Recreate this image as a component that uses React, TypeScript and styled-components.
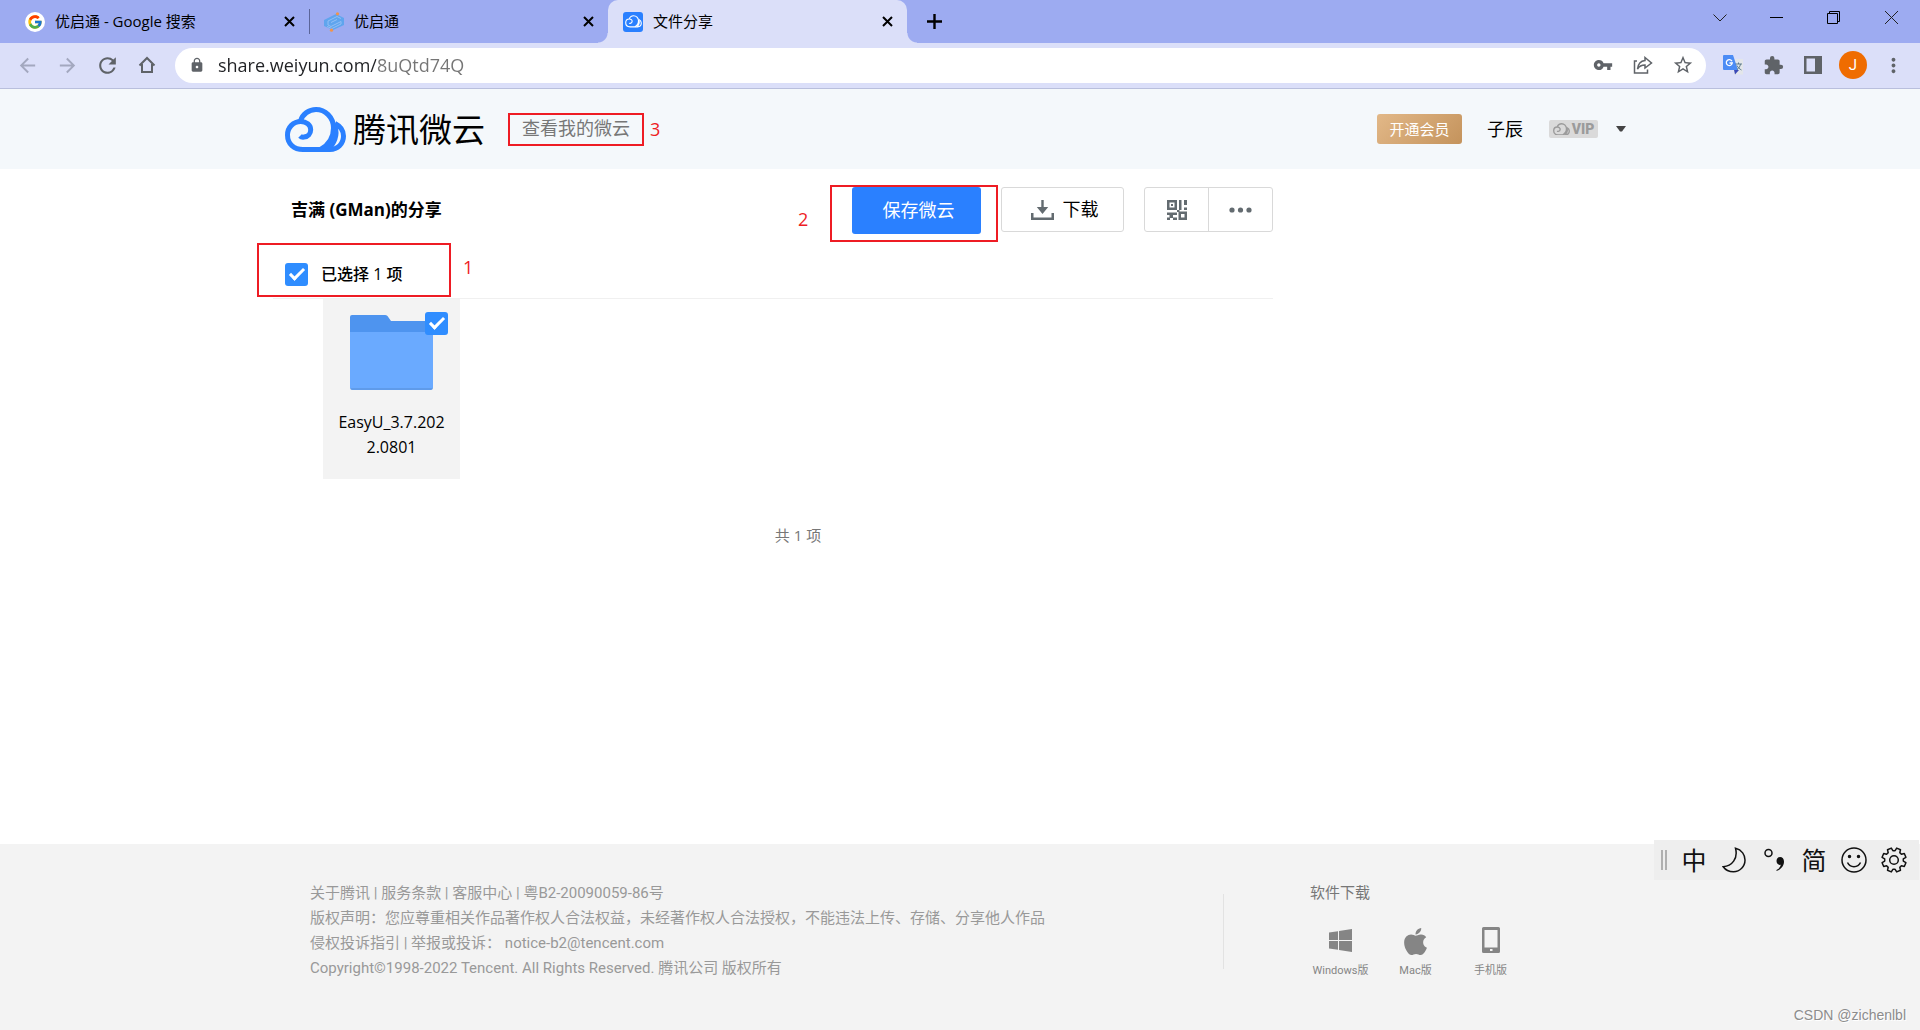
import React from "react";
import styled, { createGlobalStyle, css } from "styled-components";
import { FcGoogle } from "react-icons/fc";
import { FaApple } from "react-icons/fa";
import {
  MdArrowBack,
  MdArrowForward,
  MdRefresh,
  MdLock,
  MdVpnKey,
  MdStarBorder,
  MdExtension,
  MdMoreVert,
} from "react-icons/md";

const sans = `"Open Sans", "Noto Sans CJK SC", sans-serif`;
const narrowSans = `Roboto, "Noto Sans CJK SC", sans-serif`;

const GlobalStyle = createGlobalStyle`
  *, *::before, *::after { box-sizing: border-box; }
  body { margin: 0; background: #fff; color: #000; font: 15px/25px ${sans}; }
  button, input { font: inherit; color: inherit; }
  button { padding: 0; border: 0; background: none; cursor: pointer; }
  a { color: inherit; text-decoration: none; }
  h1, h2, ul, p { margin: 0; padding: 0; }
  ul { list-style: none; }
  svg { display: block; flex: none; }
`;

const Page = styled.div`
  position: relative;
  display: flex;
  flex-direction: column;
  min-height: 100vh;
`;

/* ---------- browser frame ---------- */

const TabStrip = styled.div`
  display: flex;
  height: 43px;
  background: #9dabf1;
`;

const Tab = styled.div<{ $active?: boolean; $divided?: boolean }>`
  position: relative;
  display: flex;
  align-items: center;
  gap: 10px;
  flex: 0 1 299px;
  padding: 0 12px 0 15px;
  ${(p) =>
    p.$divided &&
    css`
      flex-basis: 309px;
      padding-left: 25px;
      &::after {
        content: "";
        position: absolute;
        right: -1px;
        top: 9px;
        width: 1px;
        height: 25px;
        background: #5b6599;
      }
    `}
  ${(p) =>
    p.$active &&
    css`
      background: #dbdff9;
      border-radius: 10px 10px 0 0;
      &::before,
      &::after {
        content: "";
        position: absolute;
        bottom: 0;
        width: 10px;
        height: 10px;
      }
      &::before {
        left: -10px;
        background: radial-gradient(circle at 0 0, #9dabf1 9px, #dbdff9 10px);
      }
      &::after {
        right: -10px;
        background: radial-gradient(circle at 100% 0, #9dabf1 9px, #dbdff9 10px);
      }
    `}
`;

const TabTitle = styled.span`
  flex: 1;
  white-space: nowrap;
  overflow: hidden;
  line-height: 43px;
`;

const Favicon = styled.span<{ $bg?: string; $round?: boolean }>`
  display: grid;
  place-items: center;
  width: 20px;
  height: 20px;
  border-radius: ${(p) => (p.$round ? "50%" : "3px")};
  background: ${(p) => p.$bg ?? "none"};
  color: #fff;
`;

const IconButton = styled.button<{ $w?: number; $h?: number; $color?: string }>`
  display: grid;
  place-items: center;
  flex: none;
  width: ${(p) => p.$w ?? 40}px;
  height: ${(p) => p.$h ?? 35}px;
  color: ${(p) => p.$color ?? "#5f6368"};
`;

const WindowControls = styled.div`
  display: flex;
  margin-left: auto;
`;

const Toolbar = styled.div`
  display: flex;
  align-items: center;
  height: 46px;
  padding: 0 7px 1px 7px;
  background: #dbdff9;
  border-bottom: 1px solid #b9bfdd;
`;

const Omnibox = styled.div`
  display: flex;
  flex: 1;
  align-items: center;
  height: 35px;
  margin: 0 7px 0 8px;
  padding: 0 3px 0 14px;
  border-radius: 18px;
  background: #fff;
  color: #5f6368;
`;

const Address = styled.input`
  flex: 1;
  min-width: 0;
  height: 35px;
  margin-left: 13px;
  padding: 0;
  border: 0;
  outline: 0;
  font-size: 18px;
  color: #202124;
  -webkit-text-fill-color: transparent;
  background: linear-gradient(90deg, #202124 158px, #757575 158px);
  background-clip: text;
`;

const Avatar = styled.span`
  display: grid;
  place-items: center;
  width: 28px;
  height: 28px;
  border-radius: 50%;
  background: #ef6c00;
  color: #fff;
  font-family: ${narrowSans};
`;

/* ---------- site header ---------- */

const SiteHeader = styled.header`
  height: 80px;
  background: #f4f8fb;
`;

const HeaderInner = styled.div`
  display: flex;
  align-items: center;
  max-width: 1350px;
  height: 80px;
  margin: 0 auto;
`;

const Brand = styled.a`
  display: flex;
  align-items: center;
  gap: 7px;
  font-size: 33px;
  font-weight: 400;
  line-height: 45px;
  margin-right: 37px;
`;

const BrandMark = styled.span`
  color: #2a80ff;
`;

const Annotated = styled.div`
  position: relative;
`;

const Mark = styled.span<{ $top: number; $left: number; $w: number; $h: number }>`
  position: absolute;
  top: ${(p) => p.$top}px;
  left: ${(p) => p.$left}px;
  width: ${(p) => p.$w}px;
  height: ${(p) => p.$h}px;
  border: 2px solid #ee1c24;
  pointer-events: none;
`;

const MarkNumber = styled.span<{ $top: number; $left: number }>`
  position: absolute;
  top: ${(p) => p.$top}px;
  left: ${(p) => p.$left}px;
  color: #ee1c24;
  font-size: 18px;
  line-height: 25px;
`;

const MyCloudLink = styled.a`
  font-size: 18px;
  color: #777;
`;

const Account = styled.div`
  display: flex;
  align-items: center;
  margin-left: auto;
  padding-right: 9px;
`;

const JoinButton = styled.button`
  width: 85px;
  height: 30px;
  margin-right: 25px;
  border-radius: 3px;
  background: linear-gradient(135deg, #e2b888, #c4935c);
  color: #fff;
`;

const UserName = styled.span`
  font-size: 18px;
  margin-right: 26px;
`;

const VipBadge = styled.span`
  display: flex;
  align-items: center;
  justify-content: center;
  gap: 2px;
  width: 49px;
  height: 18px;
  margin-right: 18px;
  border-radius: 2px;
  background: #dadada;
  color: #9b9b9b;
  font: 900 14px/18px ${narrowSans};
`;

const MenuArrow = styled.button`
  display: grid;
  place-items: center;
  width: 10px;
  height: 20px;
`;

/* ---------- share content ---------- */

const Content = styled.div`
  flex: 1;
  width: 100%;
  max-width: 1374px;
  margin: 0 auto;
`;

const Main = styled.main`
  max-width: 1000px;
  padding-top: 18px;
`;

const TitleRow = styled.div`
  display: flex;
  align-items: flex-start;
  gap: 20px;
  height: 47px;
  padding-left: 18px;
`;

const Title = styled.h1`
  flex: 1;
  font-size: 17px;
  font-weight: 700;
  line-height: 45px;
`;

const SaveButton = styled.button`
  width: 129px;
  height: 47px;
  padding-left: 4px;
  border-radius: 3px;
  background: #2a80ff;
  color: #fff;
  font-size: 18px;
`;

const DownloadButton = styled.button`
  display: flex;
  align-items: center;
  justify-content: center;
  gap: 9px;
  width: 123px;
  height: 45px;
  padding-left: 4px;
  border: 1px solid #d9d9d9;
  border-radius: 3px;
  font-size: 18px;
`;

const ButtonGroup = styled.div`
  display: flex;
  width: 129px;
  height: 45px;
  border: 1px solid #d9d9d9;
  border-radius: 3px;
`;

const GroupButton = styled.button`
  display: grid;
  place-items: center;
  flex: 1;
  color: #636b70;
  & + & {
    border-left: 1px solid #d9d9d9;
  }
`;

const SelectRow = styled.div`
  position: relative;
  height: 65px;
  padding: 28px 12px 0;
  border-bottom: 1px solid #f0f0f0;
`;

const SelectLabel = styled.label`
  display: flex;
  align-items: center;
  gap: 13px;
  width: max-content;
  font-size: 16px;
  font-weight: 500;
`;

const Thin = styled.span`
  font-weight: 400;
`;

const CheckBox = styled.input`
  appearance: none;
  display: grid;
  place-items: center;
  width: 23px;
  height: 23px;
  margin: 0;
  border-radius: 3px;
  background: #2f8dff;
  &::after {
    content: "";
    width: 8px;
    height: 15px;
    margin-bottom: 4px;
    border: solid #fff;
    border-width: 0 3px 3px 0;
    transform: rotate(45deg);
  }
`;

const Files = styled.div`
  padding-left: 50px;
`;

const FileCard = styled.label`
  position: relative;
  display: flex;
  flex-direction: column;
  align-items: center;
  gap: 20px;
  width: 137px;
  padding: 16px 12px 19px;
  background: #f3f3f3;
`;

const CardCheck = styled(CheckBox)`
  position: absolute;
  top: 13px;
  right: 12px;
`;

const FileName = styled.span`
  font-size: 16px;
  line-height: 25px;
  text-align: center;
  word-break: break-all;
`;

const Count = styled.p`
  margin-top: 44px;
  color: #777;
  text-align: center;
`;

/* ---------- footer ---------- */

const Footer = styled.footer`
  background: #f3f3f3;
  padding: 37px 0 49px;
  font-family: ${narrowSans};
`;

const FooterInner = styled.div`
  display: flex;
  max-width: 1300px;
  margin: 0 auto;
`;

const Legal = styled.div`
  flex: 1;
  color: #999;
`;

const Downloads = styled.section`
  display: flex;
  width: 387px;
  color: #777;
  &::before {
    content: "";
    width: 1px;
    height: 75px;
    margin: 13px 79px 0 0;
    background: #e2e2e2;
  }
`;

const DownloadsTitle = styled.h2`
  padding-left: 7px;
  font-size: 15px;
  font-weight: 400;
  line-height: 25px;
`;

const Platforms = styled.ul`
  display: grid;
  grid-template-columns: repeat(3, 75px);
  padding-top: 20px;
`;

const Platform = styled.a`
  display: flex;
  flex-direction: column;
  align-items: center;
  gap: 8px;
  color: #858585;
  font-size: 11px;
  line-height: 18px;
`;

const PlatformIcon = styled.span`
  display: grid;
  place-items: center;
  height: 28px;
`;

/* ---------- floating input-method bar and watermark ---------- */

const ImeBar = styled.div`
  position: absolute;
  right: 1px;
  bottom: 150px;
  display: flex;
  align-items: center;
  width: 265px;
  height: 40px;
  padding-left: 7px;
  background: #eee;
`;

const Grip = styled.span`
  width: 6px;
  height: 20px;
  margin-right: 7px;
  border: solid #b0b0b0;
  border-width: 0 2px;
`;

const ImeKey = styled.button`
  display: grid;
  place-items: center;
  width: 40px;
  height: 40px;
  font-size: 25px;
  line-height: 40px;
  color: #111;
`;

const Watermark = styled.span`
  position: absolute;
  right: 14px;
  bottom: 5px;
  color: #8c8c8c;
  font: 14px/20px "Liberation Sans", sans-serif;
  text-shadow: 1px 1px 0 #fff;
`;

/* ---------- drawings ---------- */

const Cloud = ({ width, stroke = 5 }: { width: number; stroke?: number }) => (
  <svg width={width} viewBox="0 0 61 45" fill="none" stroke="currentColor" strokeWidth={stroke} aria-hidden>
    <path d="M15 29c1 1 2.500 1.300 4 1.100 4-.4 6.700-3.400 6.700-7.300 0-5-4.500-8.300-9.900-8.300C8.400 14.500 2.500 20.300 2.500 28c0 9 6.500 14.500 15.500 14.500h27c7.500 0 13.500-5.500 13.500-13.500 0-6-3.500-10-8.500-12.500" />
    <path d="M15.500 14C17.500 7 24 2.500 31 2.500 40 2.500 48.500 10 48.500 21c0 9-5 17-13 21.500M50 20c3 8-1 17-7 22" />
  </svg>
);

const CloseIcon = () => (
  <svg width="11" height="11" viewBox="0 0 11 11" stroke="#000" strokeWidth="2">
    <path d="M1 1l9 9M10 1l-9 9" />
  </svg>
);

const HomeIcon = () => (
  <svg width="18" height="18" viewBox="0 0 18 18" fill="none" stroke="currentColor" strokeWidth="2">
    <path d="M1.500 9.500L9 2l7.500 7.500M4 8v8h10V8" />
  </svg>
);

const HexIcon = () => (
  <svg width="20" height="20" viewBox="0 0 20 20" fill="none">
    <path d="M0 8l12-6 8 4v7l-11 5-9-4z" fill="#5fa5ee" />
    <path d="M17 6.500l-4-2-9 4.500v4l3 1.500 10-5M3 14.500l5 2 9-4.500V9.500M7 10.500l6-3" stroke="#93bff5" strokeWidth="1" />
    <circle cx="13.500" cy="1.800" r="1.600" fill="#f0944a" />
    <circle cx="7.500" cy="18.200" r="1.600" fill="#f0944a" />
  </svg>
);

const ShareIcon = () => (
  <svg width="20" height="18" viewBox="0 0 20 18" fill="none" stroke="currentColor" strokeWidth="1.500">
    <path d="M4 5H1.500v12h13v-3.500" />
    <path d="M12 1.500L18.500 7 12 12V9c-4 0-6 1.500-7.500 4C5 8.500 7.500 5 12 4.500z" />
  </svg>
);

const TranslateIcon = () => (
  <svg width="20" height="20" viewBox="0 0 20 20">
    <path d="M9 4h11v15.500H11z" fill="#e3e6ea" />
    <path d="M11 15h5l-4 4.500z" fill="#3a49b8" />
    <path d="M0 1a1 1 0 011-1h9l5 15H1a1 1 0 01-1-1z" fill="#4c8cf5" />
    <path d="M9 6.200A3 3 0 109.300 8H6.500" stroke="#fff" strokeWidth="1.300" fill="none" />
    <path d="M12.500 9h6.500M15.500 7.500V9M17.500 9c-.5 3-2 4.500-3.500 5.500M14 10.500c1 2 2.500 3.500 4.500 4.500" stroke="#5f7d8c" fill="none" />
  </svg>
);

const PanelIcon = () => (
  <svg width="18" height="18" viewBox="0 0 18 18">
    <path fillRule="evenodd" d="M0 0h18v18H0zM2.500 2.500v13H11v-13z" fill="currentColor" />
  </svg>
);

const DownloadIcon = () => (
  <svg width="23" height="20" viewBox="0 0 23 20" fill="#636b70">
    <path d="M10.300 0h2.400v7h4.500l-5.700 7-5.700-7h4.500zM0 13h2.500v4.500h18V13H23v7H0z" />
  </svg>
);

const QrIcon = () => (
  <svg width="20" height="20" viewBox="0 0 20 20" fill="currentColor">
    <path fillRule="evenodd" d="M0 0h10v10H0zM2.500 2.500v5h5v-5zM12.500 11.500H20V20h-8.500v-8.500zM14 14v3.500h3.500V14z" />
    <path d="M4 4h2v2H4zM12 0h2.500v10H12zM17 0h3v5h-3zM17 7.500h3V10h-3zM10 10h2.500v2H10zM0 12.500h10V15H6v2.500h4V20H6v-2H3v2H0v-2.500h2.500V15H0z" />
  </svg>
);

const DotsIcon = () => (
  <svg width="23" height="6" viewBox="0 0 23 6" fill="currentColor">
    <circle cx="3" cy="3" r="2.600" />
    <circle cx="11.500" cy="3" r="2.600" />
    <circle cx="20" cy="3" r="2.600" />
  </svg>
);

const FolderIcon = () => (
  <svg width="83" height="75" viewBox="0 0 83 75">
    <path d="M2 0h33q1.500 0 2.500 1L41 6h40q2 0 2 2v12H0V2q0-2 2-2z" fill="#4e94ef" />
    <path d="M0 17h83v55q0 3-2 3H2q-2 0-2-3z" fill="#5f9bea" />
    <path d="M0 17h83v56H0z" fill="#6aaaff" />
  </svg>
);

const WindowsIcon = () => (
  <svg width="23" height="23" viewBox="0 0 23 23" fill="currentColor">
    <path d="M0 3.500l9-1.300v8.800H0zM10 2l13-2v11H10zM0 12h9v8.800l-9-1.300zM10 12h13v11l-13-2z" />
  </svg>
);

const PhoneIcon = () => (
  <svg width="18" height="26" viewBox="0 0 18 26" fill="currentColor">
    <path fillRule="evenodd" d="M1.500 0h15Q18 0 18 1.500v23q0 1.500-1.500 1.500h-15Q0 26 0 24.500v-23Q0 0 1.500 0zM2.500 3v17.500h13V3zM8 22v2h2.500v-2z" />
  </svg>
);

const MoonIcon = () => (
  <svg width="24" height="26" viewBox="0 0 24 26" fill="none" stroke="#111" strokeWidth="1.500">
    <path d="M13.500 1.300C20 2.800 23 8 23 13c0 6.500-5 11.700-11.500 11.700-4.500 0-8-1.700-10.300-5 8.800-.5 15-8.200 12.300-18.400z" />
  </svg>
);

const PunctuationIcon = () => (
  <svg width="20" height="24" viewBox="0 0 20 24">
    <circle cx="4.500" cy="5" r="3.500" fill="none" stroke="#111" strokeWidth="1.500" />
    <path d="M16 9c2.500 0 4 1.800 4 4.500 0 4.500-3 8-7.500 9.500v-1c2.500-1.300 4-3 4.200-5.200-2.400.5-4.200-1.300-4.200-3.800 0-2.200 1.300-4 3.500-4z" fill="#111" />
  </svg>
);

const SmileIcon = () => (
  <svg width="26" height="26" viewBox="0 0 26 26" fill="none" stroke="#111" strokeWidth="1.500">
    <circle cx="13" cy="13" r="12" />
    <path d="M6.500 15.500c2.500 5.500 10.500 5.500 13 0" />
    <circle cx="8.500" cy="9.500" r="1" fill="#111" />
    <circle cx="17.500" cy="9.500" r="1" fill="#111" />
  </svg>
);

const gearOutline = Array.from({ length: 8 }, (_, i) => {
  const point = (radius: number, degrees: number) => {
    const angle = ((i * 45 + degrees) * Math.PI) / 180;
    return `${(13 + radius * Math.sin(angle)).toFixed(1)} ${(13 - radius * Math.cos(angle)).toFixed(1)}`;
  };
  return `${point(9.4, 7)} L${point(12.2, 13)} L${point(12.2, 32)} L${point(9.4, 38)}`;
}).join(" L");

const GearIcon = () => (
  <svg width="26" height="26" viewBox="0 0 26 26" fill="none" stroke="#111" strokeWidth="1.500" strokeLinejoin="round">
    <path d={`M${gearOutline}Z`} />
    <circle cx="13" cy="13" r="4.300" />
  </svg>
);

export default function App() {
  return (
    <Page>
      <GlobalStyle />
      <TabStrip>
        <Tab $divided>
          <Favicon $bg="#fff" $round><FcGoogle size={16} /></Favicon>
          <TabTitle>优启通 - Google 搜索</TabTitle>
          <IconButton $w={16} aria-label="关闭"><CloseIcon /></IconButton>
        </Tab>
        <Tab>
          <Favicon><HexIcon /></Favicon>
          <TabTitle>优启通</TabTitle>
          <IconButton $w={16} aria-label="关闭"><CloseIcon /></IconButton>
        </Tab>
        <Tab $active>
          <Favicon $bg="#2a80ff"><Cloud width={17} stroke={4} /></Favicon>
          <TabTitle>文件分享</TabTitle>
          <IconButton $w={16} aria-label="关闭"><CloseIcon /></IconButton>
        </Tab>
        <IconButton $w={54} $h={43} aria-label="新标签页">
          <svg width="15" height="15" viewBox="0 0 15 15" stroke="#000" strokeWidth="2.400"><path d="M7.500 0v15M0 7.500h15" /></svg>
        </IconButton>
        <WindowControls>
          <IconButton $w={57} aria-label="搜索标签页">
            <svg width="14" height="8" viewBox="0 0 14 8" fill="none" stroke="#222"><path d="M.5.500L7 7 13.500.500" /></svg>
          </IconButton>
          <IconButton $w={57} aria-label="最小化">
            <svg width="13" height="1" viewBox="0 0 13 1"><path d="M0 0h13v1H0z" fill="#000" /></svg>
          </IconButton>
          <IconButton $w={57} aria-label="还原">
            <svg width="13" height="13" viewBox="0 0 13 13" fill="none" stroke="#000"><path d="M.5 2.500h10v10H.5zM2.500 2.500v-2h10v10h-2" /></svg>
          </IconButton>
          <IconButton $w={58} aria-label="关闭窗口">
            <svg width="13" height="13" viewBox="0 0 13 13" stroke="#222"><path d="M0 0l13 13M13 0L0 13" /></svg>
          </IconButton>
        </WindowControls>
      </TabStrip>
      <Toolbar>
        <IconButton $color="#a3a8bf" aria-label="后退"><MdArrowBack size={23} /></IconButton>
        <IconButton $color="#a3a8bf" aria-label="前进"><MdArrowForward size={23} /></IconButton>
        <IconButton aria-label="刷新"><MdRefresh size={25} /></IconButton>
        <IconButton aria-label="主页"><HomeIcon /></IconButton>
        <Omnibox>
          <MdLock size={16} />
          <Address aria-label="地址" defaultValue="share.weiyun.com/8uQtd74Q" />
          <IconButton aria-label="密码"><MdVpnKey size={20} /></IconButton>
          <IconButton aria-label="分享"><ShareIcon /></IconButton>
          <IconButton aria-label="收藏"><MdStarBorder size={22} /></IconButton>
        </Omnibox>
        <IconButton aria-label="翻译"><TranslateIcon /></IconButton>
        <IconButton aria-label="扩展程序"><MdExtension size={21} /></IconButton>
        <IconButton aria-label="侧边栏"><PanelIcon /></IconButton>
        <IconButton aria-label="个人资料"><Avatar>J</Avatar></IconButton>
        <IconButton aria-label="更多"><MdMoreVert size={23} /></IconButton>
      </Toolbar>

      <SiteHeader>
        <HeaderInner>
          <Brand href="#">
            <BrandMark><Cloud width={61} /></BrandMark>
            腾讯微云
          </Brand>
          <Annotated>
            <MyCloudLink href="#">查看我的微云</MyCloudLink>
            <Mark $top={-3} $left={-14} $w={136} $h={33} />
            <MarkNumber $top={1} $left={128}>3</MarkNumber>
          </Annotated>
          <Account>
            <JoinButton>开通会员</JoinButton>
            <UserName>子辰</UserName>
            <VipBadge><Cloud width={17} />VIP</VipBadge>
            <MenuArrow aria-label="账户菜单">
              <svg width="10" height="6" viewBox="0 0 10 6"><path d="M0 0h10L6 5.500H4z" fill="#444" /></svg>
            </MenuArrow>
          </Account>
        </HeaderInner>
      </SiteHeader>

      <Content>
        <Main>
          <TitleRow>
            <Title>吉满 (GMan)的分享</Title>
            <Annotated>
              <SaveButton>保存微云</SaveButton>
              <Mark $top={-2} $left={-22} $w={168} $h={57} />
              <MarkNumber $top={20} $left={-54}>2</MarkNumber>
            </Annotated>
            <DownloadButton><DownloadIcon />下载</DownloadButton>
            <ButtonGroup>
              <GroupButton aria-label="二维码"><QrIcon /></GroupButton>
              <GroupButton aria-label="更多操作"><DotsIcon /></GroupButton>
            </ButtonGroup>
          </TitleRow>
          <SelectRow>
            <SelectLabel>
              <CheckBox type="checkbox" defaultChecked />
              <span>已选择 <Thin>1</Thin> 项</span>
            </SelectLabel>
            <Mark $top={9} $left={-16} $w={194} $h={54} />
            <MarkNumber $top={21} $left={190}>1</MarkNumber>
          </SelectRow>
          <Files>
            <FileCard>
              <FolderIcon />
              <CardCheck type="checkbox" defaultChecked />
              <FileName>EasyU_3.7.2022.0801</FileName>
            </FileCard>
            <Count>共 1 项</Count>
          </Files>
        </Main>
      </Content>

      <Footer>
        <FooterInner>
          <Legal>
            <p><a href="#">关于腾讯</a> | <a href="#">服务条款</a> | <a href="#">客服中心</a> | <a href="#">粤B2-20090059-86号</a></p>
            <p>版权声明：您应尊重相关作品著作权人合法权益，未经著作权人合法授权，不能违法上传、存储、分享他人作品</p>
            <p><a href="#">侵权投诉指引</a> | 举报或投诉： <a href="#">notice-b2@tencent.com</a></p>
            <p>Copyright©1998-2022 Tencent. All Rights Reserved. 腾讯公司 版权所有</p>
          </Legal>
          <Downloads>
            <div>
              <DownloadsTitle>软件下载</DownloadsTitle>
              <Platforms>
                <li><Platform href="#"><PlatformIcon><WindowsIcon /></PlatformIcon>Windows版</Platform></li>
                <li><Platform href="#"><PlatformIcon><FaApple size={31} /></PlatformIcon>Mac版</Platform></li>
                <li><Platform href="#"><PlatformIcon><PhoneIcon /></PlatformIcon>手机版</Platform></li>
              </Platforms>
            </div>
          </Downloads>
        </FooterInner>
      </Footer>

      <ImeBar>
        <Grip />
        <ImeKey>中</ImeKey>
        <ImeKey aria-label="全半角"><MoonIcon /></ImeKey>
        <ImeKey aria-label="标点"><PunctuationIcon /></ImeKey>
        <ImeKey>简</ImeKey>
        <ImeKey aria-label="表情"><SmileIcon /></ImeKey>
        <ImeKey aria-label="设置"><GearIcon /></ImeKey>
      </ImeBar>
      <Watermark>CSDN @zichenlbl</Watermark>
    </Page>
  );
}
